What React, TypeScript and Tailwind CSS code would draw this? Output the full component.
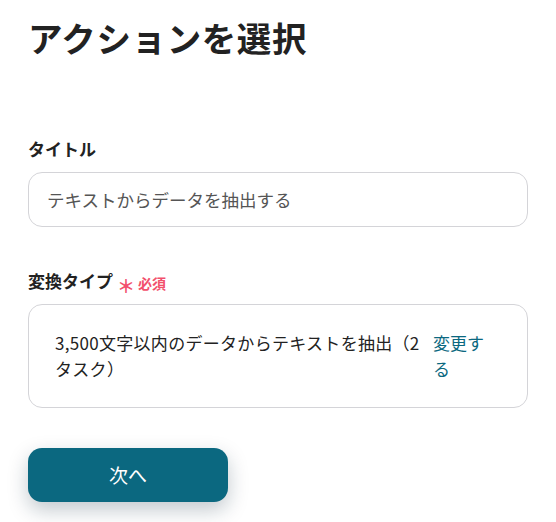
import { useState } from 'react'

/**
 * アクション選択フォーム — タイトル・変換タイプ・次へ
 */

const FONT = 'font-["Noto_Sans_CJK_JP","Noto_Sans",sans-serif]'

export default function App() {
  const [title, setTitle] = useState('テキストからデータを抽出する')

  return (
    <div className={`min-h-screen bg-white text-[#222] px-7 pt-[14px] ${FONT}`}>
      <h1 className="text-[34.5px] font-bold leading-[46px] tracking-[0.6px]">アクションを選択</h1>

      {/* タイトル */}
      <section className="mt-[77px]">
        <label className="block text-[17px] font-bold leading-6">タイトル</label>
        <input
          value={title}
          onChange={(e) => setTitle(e.target.value)}
          className="mt-[11px] w-full h-[55px] rounded-[14px] border border-[#d4d4d8] px-[18px] text-[17.5px] text-[#555] outline-none"
        />
      </section>

      {/* 変換タイプ */}
      <section className="mt-[42px]">
        <div className="flex items-end">
          <label className="text-[17px] font-bold leading-6">変換タイプ</label>
          <span className="ml-[4px] mr-[3px] text-[18px] font-bold leading-5 text-[#f2506c] translate-y-[2px]">＊</span>
          <span className="text-[14px] font-bold leading-5 text-[#f2506c]">必須</span>
        </div>
        <div className="mt-[11px] flex gap-[13px] rounded-[14px] border border-[#d4d4d8] pl-[26px] pr-[38px] py-[25px] text-[17px] leading-[26px]">
          <p className="w-[365px] shrink-0 tracking-[0.3px] text-[#222]">3,500文字以内のデータからテキストを抽出（2タスク）</p>
          <a href="#" className="w-[56px] shrink-0 text-[#0b6880]">変更する</a>
        </div>
      </section>

      <button className="mt-[40px] w-[200px] h-[54px] rounded-[14px] bg-[#0b6880] text-white text-[19px] shadow-[0_8px_20px_rgba(11,40,60,0.25)]">
        次へ
      </button>
    </div>
  )
}
